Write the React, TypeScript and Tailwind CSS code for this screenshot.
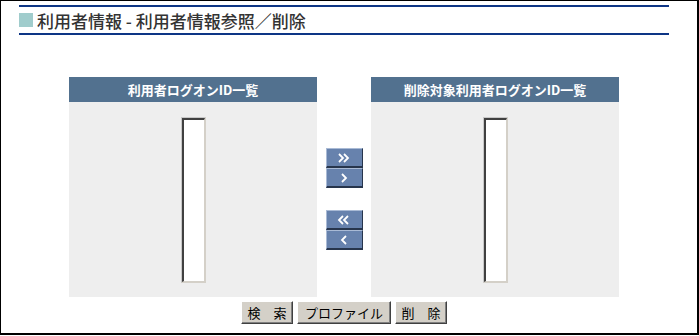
import React from "react";

const jp = { fontFamily: '"MS PGothic", "Noto Sans CJK JP", sans-serif' };

const Chevrons = ({ dir, double }: { dir: "r" | "l"; double?: boolean }) => {
  const one = (x: number) =>
    dir === "r" ? `M${x} 4 L${x + 4} 8 L${x} 12` : `M${x + 4} 4 L${x} 8 L${x + 4} 12`;
  return (
    <svg width="16" height="16" viewBox="0 0 16 16">
      <path
        d={double ? `${one(3)} ${one(8)}` : one(6)}
        fill="none"
        stroke="white"
        strokeWidth="1.8"
      />
    </svg>
  );
};

const ArrowBtn = ({ dir, double }: { dir: "r" | "l"; double?: boolean }) => (
  <div className="w-[37px] h-[20px] flex items-center justify-center bg-[#6782ad] border-t border-l border-t-[#a9bad5] border-l-[#a9bad5] border-b-2 border-r border-b-[#27354c] border-r-[#27354c]">
    <Chevrons dir={dir} double={double} />
  </div>
);

const ListBox = () => (
  <div className="w-[25px] h-[166px] border border-t-[#c8c8c8] border-l-[#c8c8c8] border-r-[#d4d0c8] border-b-[#d4d0c8]">
    <div className="w-full h-full bg-white border border-t-[#404040] border-l-[#404040] border-r-[#d4d0c8] border-b-[#d4d0c8] border-t-2 border-l-2" />
  </div>
);

const Panel = ({ title }: { title: string }) => (
  <div className="w-[248px] h-[220px] bg-[#eeeeee] flex flex-col items-center">
    <div
      className="w-full h-[25px] bg-[#52718f] text-white text-[13px] font-bold flex items-center justify-center"
      style={jp}
    >
      {title}
    </div>
    <div className="mt-[15px]">
      <ListBox />
    </div>
  </div>
);

const GrayBtn = ({ label, w }: { label: string; w: string }) => (
  <button
    className={`${w} h-[23px] bg-[#d4d0c8] text-[13px] text-black border border-t-white border-l-white border-r-[#404040] border-b-[#404040] shadow-[inset_-1px_-1px_0_#808080] flex items-center justify-center`}
    style={jp}
  >
    {label}
  </button>
);

export default function App() {
  return (
    <div className="w-[699px] h-[335px] bg-white border-t border-l border-r-2 border-b-2 border-black">
      <div className="mx-[18px] w-[650px]">
        <div className="mt-[4px] h-[2px] bg-[#0d3585]" />
        <div className="h-[26px] flex items-center gap-[4px]">
          <div className="w-[14px] h-[14px] bg-[#a0cccc]" />
          <span className="text-[17px] font-medium text-[#333333] leading-none" style={jp}>
            利用者情報 - 利用者情報参照／削除
          </span>
        </div>
        <div className="h-[2px] bg-[#0d3585]" />

        <div className="mt-[42px] flex justify-center">
          <Panel title="利用者ログオンID一覧" />
          <div className="w-[54px] flex flex-col items-center pt-[71px]">
            <ArrowBtn dir="r" double />
            <ArrowBtn dir="r" />
            <div className="h-[22px]" />
            <ArrowBtn dir="l" double />
            <ArrowBtn dir="l" />
          </div>
          <Panel title="削除対象利用者ログオンID一覧" />
        </div>

        <div className="mt-[4px] flex justify-center gap-[4px]">
          <GrayBtn label="検　索" w="w-[52px]" />
          <GrayBtn label="プロファイル" w="w-[94px]" />
          <GrayBtn label="削　除" w="w-[52px]" />
        </div>
      </div>
    </div>
  );
}
